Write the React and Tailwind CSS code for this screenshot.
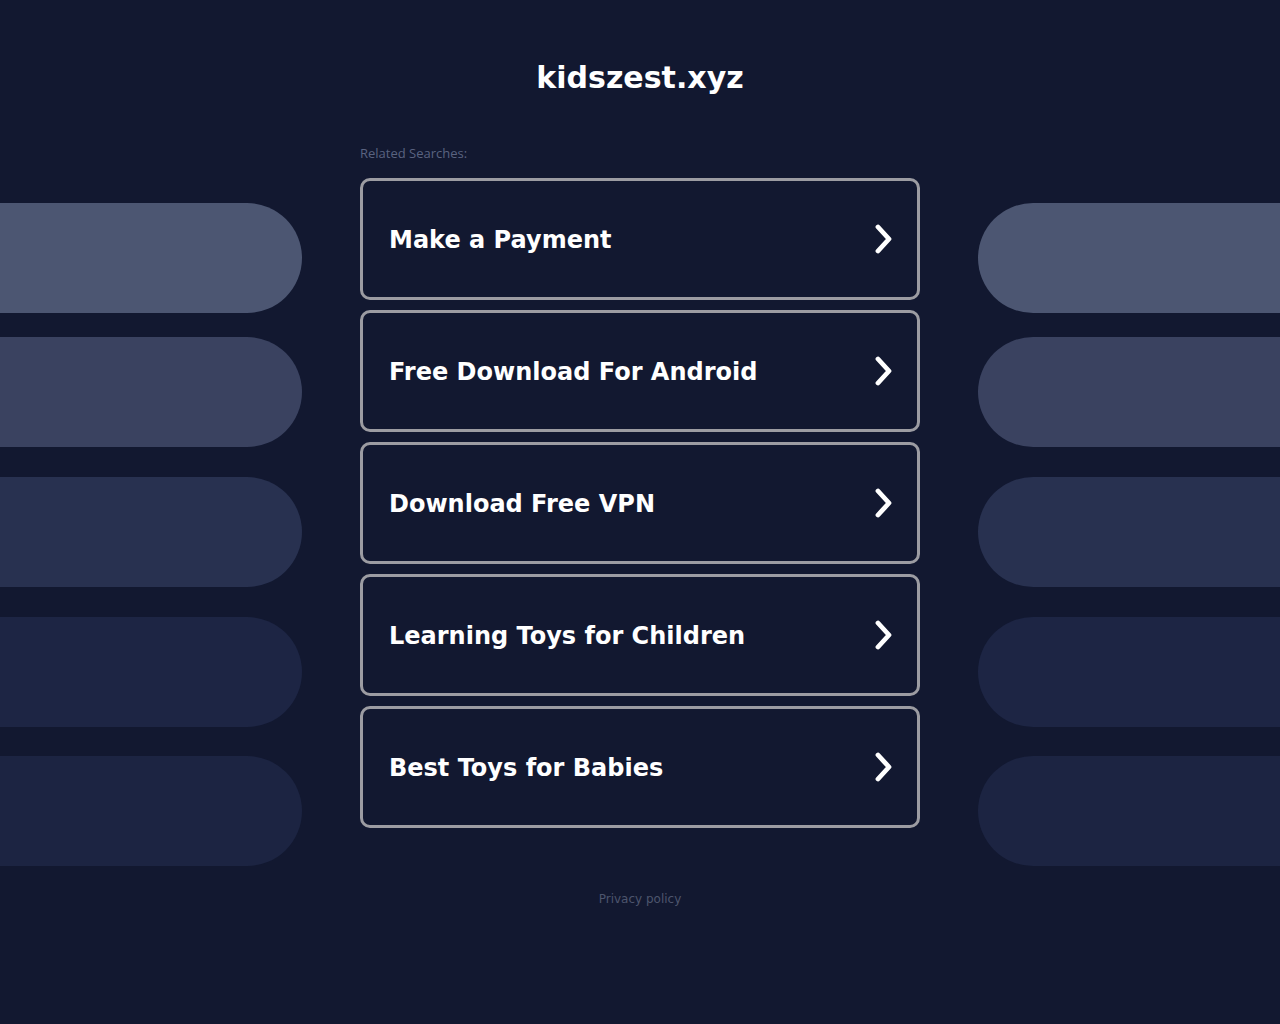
import React from "react";

const items = [
  "Make a Payment",
  "Free Download For Android",
  "Download Free VPN",
  "Learning Toys for Children",
  "Best Toys for Babies",
];

const pills = [
  { color: "bg-[#4c5672]", mt: "mt-[203px]" },
  { color: "bg-[#3a4260]", mt: "mt-[24px]" },
  { color: "bg-[#283150]", mt: "mt-[30px]" },
  { color: "bg-[#1d2544]", mt: "mt-[30px]" },
  { color: "bg-[#1c2442]", mt: "mt-[29px]" },
];

function Chevron() {
  return (
    <svg width="20" height="30" viewBox="0 0 20 30" fill="none">
      <path d="M5 3 L16 15 L5 27" stroke="white" strokeWidth="4.8" strokeLinecap="round" strokeLinejoin="round" />
    </svg>
  );
}

export default function App() {
  return (
    <div className="min-h-[1024px] w-full bg-[#121830] overflow-hidden" style={{ fontFamily: '"DejaVu Sans", sans-serif' }}>
      <div className="grid grid-cols-[302px_1fr_302px]">
        <div className="flex flex-col">
          {pills.map((p, i) => (
            <div key={i} className={`${p.mt} h-[110px] w-[302px] rounded-r-[55px] ${p.color}`} />
          ))}
        </div>
        <div className="flex flex-col items-center">
          <h1 className="mt-[59px] text-[30px] leading-[38px] font-bold text-white">kidszest.xyz</h1>
          <div className="w-[560px] mt-[48px]">
            <div className="text-[13px] leading-[16px] text-[#5a6380]" style={{ fontFamily: '"Open Sans", sans-serif' }}>Related Searches:</div>
            <div className="mt-[17px] flex flex-col gap-[10px]">
              {items.map((t) => (
                <div key={t} className="h-[122px] rounded-[10px] border-[3px] border-[#9c9ca2] flex items-center justify-between pl-[26px] pr-[24px]">
                  <span className="pt-[2px] text-[24px] font-bold text-white">{t}</span>
                  <Chevron />
                </div>
              ))}
            </div>
          </div>
          <div className="mt-[62px] text-[12px] text-[#4d556d]">Privacy policy</div>
        </div>
        <div className="flex flex-col">
          {pills.map((p, i) => (
            <div key={i} className={`${p.mt} h-[110px] w-[302px] rounded-l-[55px] ${p.color}`} />
          ))}
        </div>
      </div>
    </div>
  );
}
